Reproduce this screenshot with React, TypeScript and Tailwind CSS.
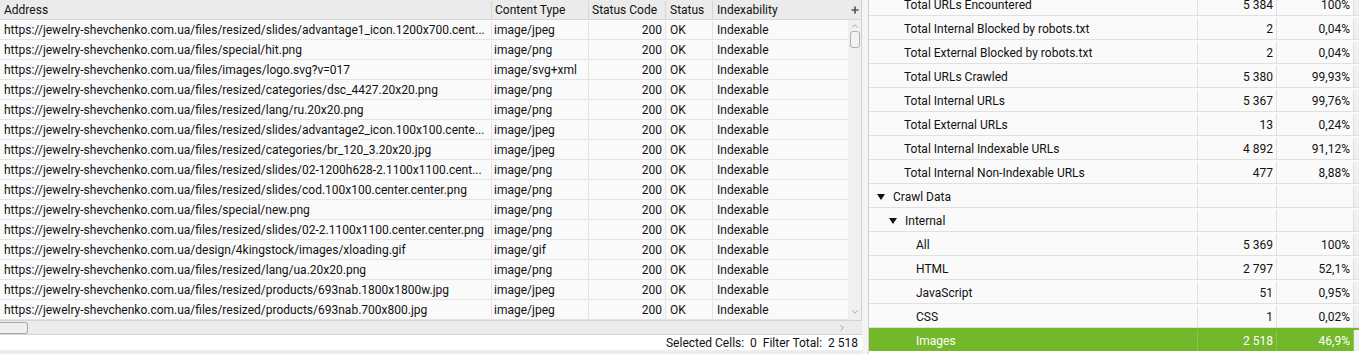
import { ChevronUp, ChevronDown, ChevronRight, Plus } from "lucide-react";

const base = "https://jewelry-shevchenko.com.ua";

const urls: [string, string][] = [
  ["/files/resized/slides/advantage1_icon.1200x700.cent...", "image/jpeg"],
  ["/files/special/hit.png", "image/png"],
  ["/files/images/logo.svg?v=017", "image/svg+xml"],
  ["/files/resized/categories/dsc_4427.20x20.png", "image/png"],
  ["/files/resized/lang/ru.20x20.png", "image/png"],
  ["/files/resized/slides/advantage2_icon.100x100.cente...", "image/jpeg"],
  ["/files/resized/categories/br_120_3.20x20.jpg", "image/jpeg"],
  ["/files/resized/slides/02-1200h628-2.1100x1100.cent...", "image/png"],
  ["/files/resized/slides/cod.100x100.center.center.png", "image/png"],
  ["/files/special/new.png", "image/png"],
  ["/files/resized/slides/02-2.1100x1100.center.center.png", "image/png"],
  ["/design/4kingstock/images/xloading.gif", "image/gif"],
  ["/files/resized/lang/ua.20x20.png", "image/png"],
  ["/files/resized/products/693nab.1800x1800w.jpg", "image/jpeg"],
  ["/files/resized/products/693nab.700x800.jpg", "image/jpeg"],
];

type Stat = { label: string; count?: string; pct?: string; level: number; toggle?: boolean; active?: boolean };

const stats: Stat[] = [
  { label: "Total URLs Encountered", count: "5 384", pct: "100%", level: 2 },
  { label: "Total Internal Blocked by robots.txt", count: "2", pct: "0,04%", level: 2 },
  { label: "Total External Blocked by robots.txt", count: "2", pct: "0,04%", level: 2 },
  { label: "Total URLs Crawled", count: "5 380", pct: "99,93%", level: 2 },
  { label: "Total Internal URLs", count: "5 367", pct: "99,76%", level: 2 },
  { label: "Total External URLs", count: "13", pct: "0,24%", level: 2 },
  { label: "Total Internal Indexable URLs", count: "4 892", pct: "91,12%", level: 2 },
  { label: "Total Internal Non-Indexable URLs", count: "477", pct: "8,88%", level: 2 },
  { label: "Crawl Data", level: 0, toggle: true },
  { label: "Internal", level: 1, toggle: true },
  { label: "All", count: "5 369", pct: "100%", level: 3 },
  { label: "HTML", count: "2 797", pct: "52,1%", level: 3 },
  { label: "JavaScript", count: "51", pct: "0,95%", level: 3 },
  { label: "CSS", count: "1", pct: "0,02%", level: 3 },
  { label: "Images", count: "2 518", pct: "46,9%", level: 3, active: true },
];

const indent = ["pl-[8px]", "pl-[20px]", "pl-[35px]", "pl-[47px]"];

function Triangle() {
  return (
    <svg width="8" height="6" viewBox="0 0 8 6" className="mr-[8px] shrink-0">
      <path d="M0 0 H8 L4 6 Z" fill="#111" />
    </svg>
  );
}

export default function App() {
  return (
    <div className="flex h-[354px] w-[1359px] overflow-hidden bg-[#f0f0f0] font-['Roboto',sans-serif] text-[12px] text-[#111]">
      {/* left: url table */}
      <div className="flex w-[862px] shrink-0 flex-col">
        <div className="flex h-[320px]">
          <div className="w-[848px] overflow-hidden bg-[#fafafa]">
            <div className="flex h-[20px] items-center border-b border-[#d8d8d8] bg-[#ebebeb]">
              <div className="w-[492px] border-r border-[#d6d6d6] pl-[4px]">Address</div>
              <div className="w-[97px] border-r border-[#d6d6d6] pl-[3px]">Content Type</div>
              <div className="w-[77px] border-r border-[#d6d6d6] pl-[3px]">Status Code</div>
              <div className="w-[47px] border-r border-[#d6d6d6] pl-[4px]">Status</div>
              <div className="flex-1 pl-[4px]">Indexability</div>
            </div>
            {urls.map(([path, type], i) => (
              <div key={i} className="flex h-[20px] items-center border-b border-[#e4e4e4] pt-[1px] whitespace-nowrap">
                <div className="flex h-full w-[492px] items-center overflow-hidden border-r border-[#e4e4e4] pl-[4px]">{base + path}</div>
                <div className="flex h-full w-[97px] items-center border-r border-[#e4e4e4] pl-[2px]">{type}</div>
                <div className="flex h-full w-[77px] items-center justify-end border-r border-[#e4e4e4] pr-[3px]">200</div>
                <div className="flex h-full w-[47px] items-center border-r border-[#e4e4e4] pl-[4px]">OK</div>
                <div className="flex h-full flex-1 items-center pl-[4px]">Indexable</div>
              </div>
            ))}
          </div>
          <div className="flex w-[14px] flex-col items-center border-r border-[#d0d0d0] bg-[#f0f0f0]">
            <div className="flex h-[20px] w-full items-center justify-center border-b border-[#d8d8d8] bg-[#ebebeb]">
              <Plus size={10} strokeWidth={4} className="text-[#555]" />
            </div>
            <ChevronUp size={10} className="mt-[1px] text-[#999]" />
            <div className="h-[17px] w-[10px] rounded-[3px] border border-[#b0b0b0] bg-[#f3f3f3]" />
            <div className="flex-1" />
            <ChevronDown size={10} className="mb-[3px] text-[#999]" />
          </div>
        </div>
        <div className="flex h-[15px] items-center border-y border-[#d4d4d4] bg-[#ececec]">
          <div className="h-[12px] w-[28px] rounded-r-[3px] border border-l-0 border-[#a8a8a8] bg-[#efefef]" />
          <div className="flex-1" />
          <ChevronRight size={10} className="mr-[15px] text-[#999]" />
        </div>
        <div className="flex h-[15px] items-center justify-end bg-white pr-[4px] pt-[1px] text-[12px]">
          Selected Cells:&nbsp;&nbsp;0&nbsp;&nbsp;Filter Total:&nbsp;&nbsp;2 518
        </div>
        <div className="flex-1 bg-[#ececec]" />
      </div>

      {/* splitter */}
      <div className="w-[7px] shrink-0 border-r border-[#cfcfcf] bg-[#f4f4f4]" />

      {/* right: overview */}
      <div className="flex flex-1 flex-col bg-[#fafafa]">
        <div className="h-[351px] overflow-hidden">
          <div className="-mt-[8px]">
            {stats.map((s, i) => (
              <div
                key={i}
                className={`flex h-[24px] items-center border-b pt-[2px] ${s.active ? "border-[#73b72b] bg-[#73b72b] text-white" : "border-[#e0e0e0] text-[#111]"}`}
              >
                <div className={`flex h-full w-[329px] items-center border-r ${s.active ? "border-[#8cc54e]" : "border-[#e0e0e0]"} ${indent[s.level]}`}>
                  {s.toggle && <Triangle />}
                  {s.label}
                </div>
                <div className={`flex h-full w-[79px] items-center justify-end border-r pr-[3px] ${s.active ? "border-[#8cc54e]" : "border-[#e0e0e0]"}`}>{s.count}</div>
                <div className={`flex h-full w-[77px] items-center justify-end border-r pr-[3px] ${s.active ? "border-[#8cc54e]" : "border-[#e0e0e0]"}`}>{s.pct}</div>
                <div className="h-full flex-1 bg-[#f0f0f0]" />
              </div>
            ))}
          </div>
        </div>
        <div className="flex-1 bg-white" />
      </div>
    </div>
  );
}
